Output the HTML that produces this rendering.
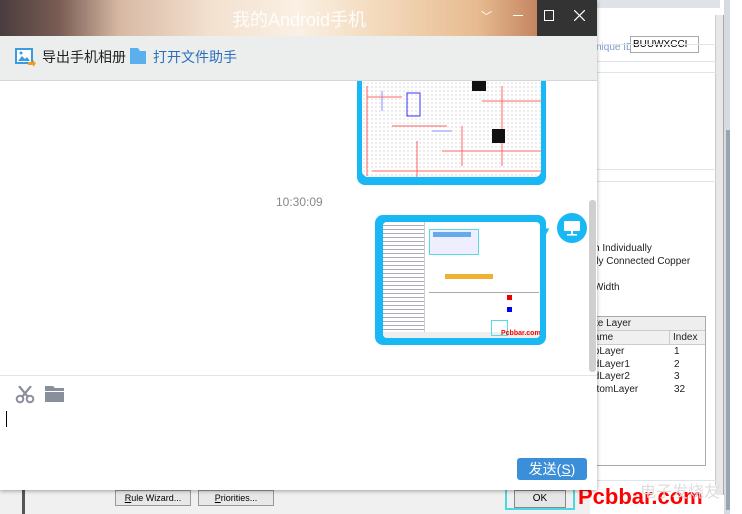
<!DOCTYPE html>
<html><head><meta charset="utf-8"><style>
*{margin:0;padding:0;box-sizing:border-box}
body{width:742px;height:514px;position:relative;overflow:hidden;background:#f0f0f0;font-family:"Liberation Sans","Noto Sans CJK SC",sans-serif}
.abs{position:absolute}
.dot{background-image:radial-gradient(#bbb 0.6px,transparent 0.8px);background-size:4px 4px}
</style></head><body>
<div class="abs" style="left:0;top:490px;width:590px;height:24px;background:#f0f0f0"></div>
<div class="abs" style="left:22px;top:490px;width:3px;height:24px;background:#555"></div>
<div class="abs" style="left:115px;top:490px;width:76px;height:16px;border:1px solid #999;background:#e8e8e8;font-size:9px;text-align:center;line-height:14px"><u>R</u>ule Wizard...</div>
<div class="abs" style="left:198px;top:490px;width:76px;height:16px;border:1px solid #999;background:#e8e8e8;font-size:9px;text-align:center;line-height:14px"><u>P</u>riorities...</div>
<!-- background dialog on right -->
<div class="abs" style="left:590px;top:0;width:152px;height:514px;background:#fff"></div>
<div class="abs" style="left:590px;top:0;width:130px;height:8px;background:#dfe3e8"></div>
<div class="abs" style="left:596px;top:15px;width:120px;height:470px;background:#fff;border-right:1px solid #ccc"></div>
<div class="abs" style="left:716px;top:15px;width:8px;height:480px;background:#e8e8e8;border-right:1px solid #aaa"></div>
<div class="abs" style="left:724px;top:0;width:6px;height:514px;background:#d6dbe2"></div>
<div class="abs" style="left:726px;top:130px;width:4px;height:380px;background:#9aa5b2"></div>
<div class="abs" style="left:596px;top:42px;width:40px;font-size:10px;color:#7a9ccc">nique ID</div>
<div class="abs" style="left:630px;top:36px;width:69px;height:17px;border:1px solid #aaa;background:#fff;font-size:10px;padding:2px 2px;color:#000">BUUWXCCI</div>
<div class="abs" style="left:597px;top:44px;width:120px;height:18px;border:1px solid #dde4ec;border-left:none"></div>
<div class="abs" style="left:597px;top:72px;width:120px;height:98px;border:1px solid #dde4ec;border-left:none"></div>
<div class="abs" style="left:597px;top:181px;width:120px;height:300px;border:1px solid #dde4ec;border-left:none"></div>
<div class="abs" style="left:594px;top:242px;font-size:10px;color:#222;line-height:13px">h Individually<br>lly Connected Copper<br><br>Width</div>
<div class="abs" style="left:590px;top:316px;width:116px;height:150px;border:1px solid #aaa;background:#fff;font-size:10px;color:#222">
<div style="height:14px;background:#eee;border-bottom:1px solid #ccc;padding-left:4px;line-height:14px">te Layer</div>
<div style="height:14px;background:#f0f0f0;border-bottom:1px solid #ccc;line-height:14px;position:relative">&nbsp;ame<span style="position:absolute;left:78px;border-left:1px solid #ccc;padding-left:3px">Index</span></div>
<div style="line-height:12.5px;position:relative;padding-top:1px">&nbsp;pLayer<br>&nbsp;dLayer1<br>&nbsp;dLayer2<br>&nbsp;ttomLayer
<div style="position:absolute;left:83px;top:1px">1<br>2<br>3<br>32</div></div></div>
<div class="abs" style="left:505px;top:486px;width:70px;height:24px;border:2px solid #4cd6e0"></div>
<div class="abs" style="left:514px;top:490px;width:52px;height:18px;border:1px solid #888;background:#e6e6e6;font-size:10px;text-align:center;line-height:16px">OK</div>
<div class="abs" style="left:578px;top:484px;font-size:22px;font-weight:bold;color:#f00;font-family:'Liberation Sans'">Pcbbar.com</div>
<div class="abs" style="left:640px;top:478px;font-size:16px;color:#ddd">电子发烧友</div>

<!-- chat window -->
<div class="abs" style="left:0;top:0;width:597px;height:490px;background:#fff;box-shadow:0 1px 4px rgba(0,0,0,.35)"></div>
<div class="abs" style="left:0;top:0;width:597px;height:36px;background:linear-gradient(90deg,#4a3c3e 0%,#7a5d55 10%,#d7b9a3 20%,#f3e0cf 35%,#faf0e3 50%,#f2d7b8 65%,#e7bb90 80%,#c48560 90%)"></div>
<div class="abs" style="left:537px;top:0;width:60px;height:36px;background:#333"></div>
<div class="abs" style="left:232px;top:6px;font-size:18px;color:#fff;opacity:.9">我的Android手机</div>
<div class="abs" style="left:481px;top:8px;font-size:11px;color:#fff">﹀</div>
<div class="abs" style="left:513px;top:15px;width:10px;height:1px;background:#fff"></div>
<div class="abs" style="left:544px;top:10px;width:10px;height:11px;border:1.5px solid #fff"></div>
<svg class="abs" style="left:574px;top:10px" width="11" height="11"><path d="M0 0L11 11M11 0L0 11" stroke="#fff" stroke-width="1.2"/></svg>
<div class="abs" style="left:0;top:36px;width:597px;height:45px;background:#eceeee;border-bottom:1px solid #d6d6d6"></div>
<svg class="abs" style="left:15px;top:48px" width="21" height="19"><rect x="1" y="1" width="16" height="14" fill="#fff" stroke="#3a9de0" stroke-width="2"/><path d="M3 13l4-5 3 3 2-2 3 4z" fill="#3a9de0"/><circle cx="6" cy="5" r="1.5" fill="#3a9de0"/><path d="M13 14h5v-2l3 3.5-3 3.5v-2h-5z" fill="#f39a1e"/></svg>
<div class="abs" style="left:42px;top:47px;font-size:14px;color:#222">导出手机相册</div>
<svg class="abs" style="left:130px;top:48px" width="16" height="16"><path d="M0 0h8l2 3h6v13H0z" fill="#5ab0ec"/></svg>
<div class="abs" style="left:153px;top:47px;font-size:14px;color:#2b6fba">打开文件助手</div>

<!-- bubble 1 -->
<div class="abs" style="left:357px;top:81px;width:189px;height:104px;background:#17b8f3;border-radius:0 0 8px 8px"></div>
<div class="abs dot" style="left:362px;top:81px;width:179px;height:96px;background-color:#fff;border-radius:0 0 6px 6px;overflow:hidden">
<svg width="179" height="96"><g stroke-width="1">
<path d="M5 16h35M120 20h60M10 90h170M5 5v90M140 5v80M55 60v40M100 45v40M80 70h100M30 45h55" stroke="#f66" fill="none"/>
<rect x="45" y="12" width="13" height="23" stroke="#33f" fill="none"/><rect x="110" y="0" width="14" height="10" fill="#111"/><rect x="130" y="48" width="13" height="14" fill="#111"/>
<path d="M20 10v20M70 50h20" stroke="#88f"/></g></svg></div>
<div class="abs" style="left:276px;top:195px;font-size:12px;color:#888">10:30:09</div>
<!-- bubble 2 -->
<div class="abs" style="left:375px;top:215px;width:171px;height:130px;background:#17b8f3;border-radius:8px"></div>
<div class="abs" style="left:540px;top:225px;width:0;height:0;border-left:10px solid #17b8f3;border-top:6px solid transparent;border-bottom:6px solid transparent;transform:rotate(-30deg)"></div>
<div class="abs" style="left:383px;top:222px;width:157px;height:116px;background:#fff;border-radius:4px;overflow:hidden">
<div class="abs" style="left:0;top:0;width:42px;height:110px;background:#f6f6f6;border-right:1px solid #ccc;background-image:repeating-linear-gradient(#fff 0 3px,#aab 3px 4px)"></div>
<div class="abs" style="left:46px;top:7px;width:50px;height:26px;border:1px solid #5dd;background:#eef"></div>
<div class="abs" style="left:50px;top:10px;width:38px;height:5px;background:#6ae"></div>
<div class="abs" style="left:62px;top:52px;width:48px;height:5px;background:#f0b030"></div>
<div class="abs" style="left:46px;top:70px;width:110px;height:1px;background:#aaa"></div>
<div class="abs" style="left:124px;top:73px;width:5px;height:5px;background:#e00"></div>
<div class="abs" style="left:124px;top:85px;width:5px;height:5px;background:#00f"></div>
<div class="abs" style="left:0;top:110px;width:157px;height:6px;background:#eee"></div>
<div class="abs" style="left:108px;top:98px;width:17px;height:16px;border:1px solid #5dd"></div>
<div class="abs" style="left:118px;top:108px;font-size:7px;font-weight:bold;color:#f00">Pcbbar.com</div>
</div>
<div class="abs" style="left:557px;top:213px;width:30px;height:30px;border-radius:50%;background:#17b8f3"></div>
<svg class="abs" style="left:563px;top:220px" width="18" height="16"><rect x="1" y="1" width="16" height="10" rx="1" fill="#fff"/><rect x="8" y="11" width="2" height="3" fill="#fff"/><rect x="4" y="14" width="10" height="1.6" fill="#fff"/></svg>
<div class="abs" style="left:589px;top:200px;width:7px;height:172px;background:#cfcfcf;border-radius:3px"></div>
<div class="abs" style="left:0;top:375px;width:597px;height:1px;background:#e3e3e3"></div>
<svg class="abs" style="left:15px;top:386px" width="20" height="18"><path d="M4 0l9 11M16 0L7 11" stroke="#8a8f9c" stroke-width="2.2"/><circle cx="5" cy="13" r="3.3" fill="none" stroke="#8a8f9c" stroke-width="2"/><circle cx="15" cy="13" r="3.3" fill="none" stroke="#8a8f9c" stroke-width="2"/></svg>
<svg class="abs" style="left:45px;top:386px" width="20" height="17"><path d="M0 0h8l2 2h9v3H0z M0 6h19v10H0z" fill="#8a8f9c"/></svg>
<div class="abs" style="left:6px;top:411px;width:1px;height:16px;background:#000"></div>
<div class="abs" style="left:517px;top:458px;width:70px;height:22px;background:#3b8fd9;border-radius:3px;color:#fff;font-size:14px;text-align:center;line-height:22px">发送(<u>S</u>)</div>
</body></html>
